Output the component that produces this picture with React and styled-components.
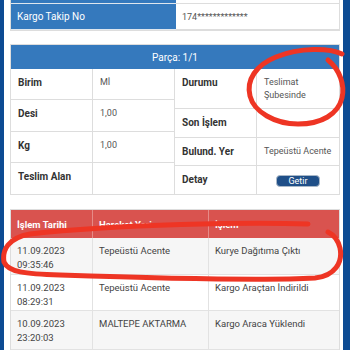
import { Fragment } from 'react';
import styled, { createGlobalStyle } from 'styled-components';

const GlobalStyle = createGlobalStyle`
	* { box-sizing: border-box; }
	body {
		margin: 0;
		font-family: Roboto, 'Noto Sans', sans-serif;
		background: #fff;
	}
`;

const Page = styled.div`
	position: relative;
	display: flex;
	height: 350px;
	width: 350px;
	overflow: hidden;
	background: #fff;
`;

const Edge = styled.div`
	width: ${p => p.$w}px;
	flex-shrink: 0;
	background: #0d4b93;
`;

const Content = styled.div`
	flex: 1;
	padding: 0 3px 0 6px;
	display: flex;
	flex-direction: column;
	overflow: hidden;
`;

const InfoTable = styled.div`
	margin-top: -22px;
	display: grid;
	grid-template-columns: 165px 1fr;
	border: 1px solid #ddd;
	border-top: none;
`;

const InfoLabel = styled.div`
	height: 26px;
	padding-left: 6px;
	display: flex;
	align-items: center;
	background: #3579bd;
	color: #fff;
	font-size: 10px;
	border-bottom: 1px solid #dfe6ee;
`;

const InfoValue = styled.div`
	height: 26px;
	padding-left: 6px;
	display: flex;
	align-items: center;
	color: #555;
	font-size: 9px;
	border-bottom: 1px solid #ddd;
`;

const Panel = styled.div`
	margin-top: ${p => p.$gap}px;
	border: 1px solid #ddd;
	flex-shrink: 0;
`;

const PanelHead = styled.div`
	height: 24px;
	display: flex;
	align-items: center;
	justify-content: center;
	background: #3579bd;
	color: #fff;
	font-size: 10px;
`;

const Halves = styled.div`
	display: grid;
	grid-template-columns: 164px 1fr;
`;

const DetailGrid = styled.div`
	display: grid;
	grid-template-columns: 82px 1fr;
	grid-template-rows: ${p => p.$rows};
	border-right: ${p => (p.$split ? '1px solid #ddd' : 'none')};
`;

const Cell = styled.div`
	padding: 7px 7px 0;
	line-height: 13px;
	border-bottom: ${p => (p.$last ? 'none' : '1px solid #ddd')};
	border-right: ${p => (p.$label ? '1px solid #ddd' : 'none')};
	font-size: ${p => (p.$label ? '10px' : '9px')};
	font-weight: ${p => (p.$label ? 700 : 400)};
	color: ${p => (p.$label ? '#333' : '#555')};
	text-align: ${p => (p.$center ? 'center' : 'left')};
`;

const GetButton = styled.button`
	width: 44px;
	height: 12px;
	margin-top: 2px;
	padding: 0;
	border: 1px solid #a9b8c8;
	border-radius: 4px;
	background: #1f4f88;
	color: #fff;
	font-family: Roboto, sans-serif;
	font-size: 9px;
	line-height: 10px;
`;

const History = styled.div`
	display: grid;
	grid-template-columns: 82px 116px 1fr;
`;

const HeadCell = styled.div`
	height: 28px;
	padding: 0 6px;
	display: flex;
	align-items: center;
	background: #d9534f;
	color: #fff;
	font-size: 9.5px;
	font-weight: 700;
	border-right: ${p => (p.$end ? 'none' : '1px solid #e68a87')};
`;

const RowCell = styled.div`
	height: ${p => p.$h}px;
	padding: 6px 6px 0;
	line-height: 14px;
	font-size: 9.5px;
	color: #444;
	background: ${p => (p.$odd ? '#f6f6f6' : '#fff')};
	border-bottom: 1px solid #e2e2e2;
	border-right: ${p => (p.$end ? 'none' : '1px solid #e2e2e2')};
`;

const Marks = styled.svg`
	position: absolute;
	left: 0;
	top: 0;
	pointer-events: none;
`;

const leftRows = [
	['Birim', 'Mİ'],
	['Desi', '1,00'],
	['Kg', '1,00'],
	['Teslim Alan', ''],
];

const history = [
	['11.09.2023', '09:35:46', 'Tepeüstü Acente', 'Kurye Dağıtıma Çıktı', 37],
	['11.09.2023', '08:29:31', 'Tepeüstü Acente', 'Kargo Araçtan İndirildi', 36],
	['10.09.2023', '23:20:03', 'MALTEPE AKTARMA', 'Kargo Araca Yüklendi', 39],
];

const App = () => (
	<>
		<GlobalStyle />
		<Page>
			<Edge $w={4} />
			<Content>
				<InfoTable>
					<InfoLabel />
					<InfoValue />
					<InfoLabel>Kargo Takip No</InfoLabel>
					<InfoValue>174*************</InfoValue>
				</InfoTable>

				<Panel $gap={13}>
					<PanelHead>Parça: 1/1</PanelHead>
					<Halves>
						<DetailGrid $rows='31px 32px 31px 31px' $split>
							{leftRows.map(([label, value], i) => (
								<Fragment key={label}>
									<Cell $label $last={i === 3}>{label}</Cell>
									<Cell $last={i === 3}>{value}</Cell>
								</Fragment>
							))}
						</DetailGrid>
						<DetailGrid $rows='40px 29px 28px 28px'>
							<Cell $label>Durumu</Cell>
							<Cell>Teslimat<br />Şubesinde</Cell>
							<Cell $label>Son İşlem</Cell>
							<Cell></Cell>
							<Cell $label>Bulund. Yer</Cell>
							<Cell>Tepeüstü Acente</Cell>
							<Cell $label $last>Detay</Cell>
							<Cell $last $center><GetButton>Getir</GetButton></Cell>
						</DetailGrid>
					</Halves>
				</Panel>

				<Panel $gap={14}>
					<History>
						<HeadCell>İşlem Tarihi</HeadCell>
						<HeadCell>Hareket Yeri</HeadCell>
						<HeadCell $end>İşlem</HeadCell>
						{history.map(([date, time, place, action, h], i) => (
							<Fragment key={i}>
								<RowCell $h={h} $odd={i % 2 === 0}>{date}<br />{time}</RowCell>
								<RowCell $h={h} $odd={i % 2 === 0}>{place}</RowCell>
								<RowCell $h={h} $odd={i % 2 === 0} $end>{action}</RowCell>
							</Fragment>
						))}
						<RowCell $h={20} $odd />
						<RowCell $h={20} $odd />
						<RowCell $h={20} $odd $end />
					</History>
				</Panel>
			</Content>
			<Edge $w={7} />

			<Marks width='350' height='350' viewBox='0 0 350 350'>
				<g fill='none' stroke='#ee3524' strokeWidth='5' strokeLinecap='round' strokeLinejoin='round'>
					<path d='M 342 54 C 330 48, 300 47, 276 57 C 256 65, 246 80, 250 96 C 254 112, 275 124, 298 124 C 322 124, 338 114, 342 98 C 345 85, 340 70, 328 60' />
					<path d='M 308 224 C 250 222, 120 224, 30 234 C 8 238, 2 250, 4 262 C 8 272, 25 274, 60 275 C 150 278, 260 281, 315 278 C 335 276, 343 262, 340 248 C 338 240, 334 235, 328 232' />
				</g>
			</Marks>
		</Page>
	</>
);

export default App;
